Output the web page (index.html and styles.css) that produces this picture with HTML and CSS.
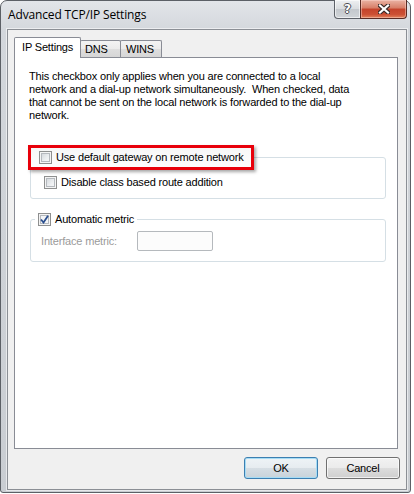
FILE: index.html
```html
<!DOCTYPE html>
<html lang="en">
<head>
    <meta charset="UTF-8">
    <title>Advanced TCP/IP Settings</title>
    <link rel="stylesheet" href="styles.css">
</head>
<body>
    <div class="window">
        <div class="titlebar">
            <span class="title">Advanced TCP/IP Settings</span>
            <div class="caption">
                <div class="cap help">?</div>
                <div class="cap close">
                    <svg width="12" height="10" viewBox="0 0 12 10">
                        <path d="M2 1.5 L10 8.5 M10 1.5 L2 8.5" stroke="#3a2a28" stroke-width="4.4" stroke-linecap="square" fill="none"/>
                        <path d="M2 1.5 L10 8.5 M10 1.5 L2 8.5" stroke="#ffffff" stroke-width="2.2" stroke-linecap="square" fill="none"/>
                    </svg>
                </div>
            </div>
        </div>

        <div class="client">
            <div class="tabs">
                <div class="tab active">IP Settings</div>
                <div class="tab dns">DNS</div>
                <div class="tab wins">WINS</div>
            </div>

            <div class="panel">
                <p class="info">This checkbox only applies when you are connected to a local<br>network and a dial-up network simultaneously.&nbsp; When checked, data<br>that cannot be sent on the local network is forwarded to the dial-up<br>network.</p>

                <div class="group gateway">
                    <label class="check highlight"><span class="box"></span>Use default gateway on remote network</label>
                    <label class="check sub"><span class="box"></span>Disable class based route addition</label>
                </div>

                <div class="group metric">
                    <label class="check legend">
                        <span class="box checked">
                            <svg width="9" height="9" viewBox="0 0 9 9">
                                <path d="M1 4.5 L3.5 7.5 L8 0.8" stroke="#2a4e8e" stroke-width="1.8" fill="none"/>
                            </svg>
                        </span>Automatic metric
                    </label>
                    <div class="field">
                        <span class="disabled">Interface metric:</span>
                        <span class="input"></span>
                    </div>
                </div>
            </div>

            <div class="buttons">
                <button class="btn default">OK</button>
                <button class="btn">Cancel</button>
            </div>
        </div>
    </div>
</body>
</html>
```

FILE: styles.css
```css
body, html {
    margin: 0;
    padding: 0;
    background: #fff;
    font-family: 'Liberation Sans', Arial, sans-serif;
    font-size: 11px;
    letter-spacing: -0.17px;
    color: #000;
}

.window {
    width: 411px;
    height: 493px;
    box-sizing: border-box;
    border: 1px solid #5c6066;
    border-radius: 7px 7px 3px 3px;
    background: linear-gradient(to bottom, #e2e5e9 0%, #d3d7dc 30px, #c9cdd2 100%);
    display: flex;
    flex-direction: column;
}

.titlebar {
    height: 28px;
    display: flex;
    justify-content: space-between;
    align-items: flex-start;
}

.title {
    font-family: 'Open Sans', sans-serif;
    font-size: 12px;
    letter-spacing: -0.15px;
    padding-left: 7px;
    line-height: 28px;
    color: #000;
}

.caption {
    display: flex;
    margin-top: -1px;
    margin-right: 3px;
}

.cap {
    height: 19px;
    box-sizing: border-box;
    border: 1px solid #5d6168;
    border-top: 0;
    display: flex;
    justify-content: center;
    align-items: center;
}

.help {
    width: 27px;
    border-radius: 0 0 0 4px;
    background: linear-gradient(to bottom, #eef0f2 0%, #d9dcdf 50%, #c4c8cd 51%, #d0d4d8 100%);
    box-shadow: inset 0 0 0 1px rgba(255, 255, 255, 0.6);
    color: #fff;
    font-family: 'DejaVu Sans', sans-serif;
    font-weight: bold;
    font-size: 12px;
    text-shadow: 1px 0 0 #4a4d52, -1px 0 0 #4a4d52, 0 1px 0 #4a4d52, 0 -1px 0 #4a4d52;
}

.close {
    width: 47px;
    margin-left: -1px;
    border-color: #5a2b24;
    border-radius: 0 0 4px 0;
    background: linear-gradient(to bottom, #eab3a4 0%, #d77d66 45%, #c4432b 50%, #cc5034 80%, #e2835c 100%);
    box-shadow: inset 0 0 0 1px rgba(255, 220, 210, 0.45);
}

/* client area */
.client {
    height: 461px;
    box-sizing: border-box;
    margin: 0 3px 2px 6px;
    border: 1px solid #8b8f95;
    background: #f0f0f0;
    box-shadow: 0 0 0 1px rgba(255, 255, 255, 0.55);
}

.tabs {
    display: flex;
    align-items: flex-end;
    margin: 7px 0 0 6px;
}

.tab {
    height: 17px;
    box-sizing: border-box;
    border: 1px solid #898c95;
    border-bottom: 0;
    border-radius: 2px 2px 0 0;
    margin-left: -1px;
    line-height: 16px;
    background: linear-gradient(to bottom, #f3f3f3 0%, #ebebeb 50%, #dedede 51%, #d6d6d6 100%);
}

.tab.dns {
    width: 41px;
    padding-left: 4px;
}

.tab.wins {
    width: 42px;
    padding-left: 5px;
}

.tab.active {
    width: 67px;
    height: 21px;
    margin-left: 0;
    margin-bottom: -1px;
    padding-left: 7px;
    line-height: 19px;
    background: #fff;
    position: relative;
    z-index: 1;
}

.panel {
    height: 392px;
    box-sizing: border-box;
    margin: 0 8px 0 6px;
    border: 1px solid #898c95;
    background: #fff;
    overflow: hidden;
}

.info {
    margin: 12px 0 0 14px;
    line-height: 13px;
    white-space: nowrap;
}

/* group boxes */
.group {
    border: 1px solid #d5dfe5;
    border-radius: 3px;
    margin: 0 11px 0 15px;
    display: flex;
    flex-direction: column;
    align-items: flex-start;
}

.gateway {
    margin-top: 35px;
    padding-bottom: 9px;
}

.metric {
    margin-top: 20px;
    padding-bottom: 10px;
}

.check {
    display: flex;
    align-items: center;
    gap: 4px;
    line-height: 13px;
    white-space: nowrap;
}

.highlight {
    height: 19px;
    margin: -13px 0 0 -3px;
    padding: 0 7px 0 8px;
    border: 3px solid #e8000a;
    background: linear-gradient(to bottom, #f7f7f7, #fdfdfd);
    box-shadow: 2px 2px 3px rgba(0, 0, 0, 0.35);
}

.sub {
    margin: 6px 0 0 13px;
}

.legend {
    margin: -7px 0 0 4px;
    padding: 0 3px;
    background: #fff;
}

.box {
    width: 13px;
    height: 13px;
    box-sizing: border-box;
    flex: none;
    border: 1px solid #8e8f8f;
    background: linear-gradient(135deg, #cdd1d6 0%, #eef0f2 60%, #fafafa 100%);
    box-shadow: inset 0 0 0 1px #f4f4f4, inset 0 0 0 2px #b5b9be;
    display: flex;
    justify-content: center;
    align-items: center;
}

.box.checked {
    background: #f4f5f7;
}

.field {
    display: flex;
    align-items: center;
    margin: 5px 0 0 10px;
}

.disabled {
    width: 96px;
    color: #9b9b9b;
}

.input {
    width: 76px;
    height: 20px;
    box-sizing: border-box;
    border: 1px solid #b5b9bd;
    border-radius: 2px;
    background: #fcfcfc;
}

/* dialog buttons */
.buttons {
    display: flex;
    justify-content: flex-end;
    gap: 8px;
    margin: 8px 6px 0 0;
}

.btn {
    width: 74px;
    height: 22px;
    padding: 0;
    border: 1px solid #707070;
    border-radius: 3px;
    font-family: 'Liberation Sans', Arial, sans-serif;
    font-size: 11px;
    letter-spacing: -0.17px;
    color: #000;
    background: linear-gradient(to bottom, #f2f2f2 0%, #ebebeb 50%, #dddddd 51%, #cfcfcf 100%);
    box-shadow: inset 0 0 0 1px rgba(255, 255, 255, 0.7);
}

.btn.default {
    border-color: #3c7fb1;
    background: linear-gradient(to bottom, #eef3f6 0%, #e6ecf0 50%, #d6dee4 51%, #c9d3da 100%);
    box-shadow: inset 0 0 0 1px #a6dcf5;
}
```
